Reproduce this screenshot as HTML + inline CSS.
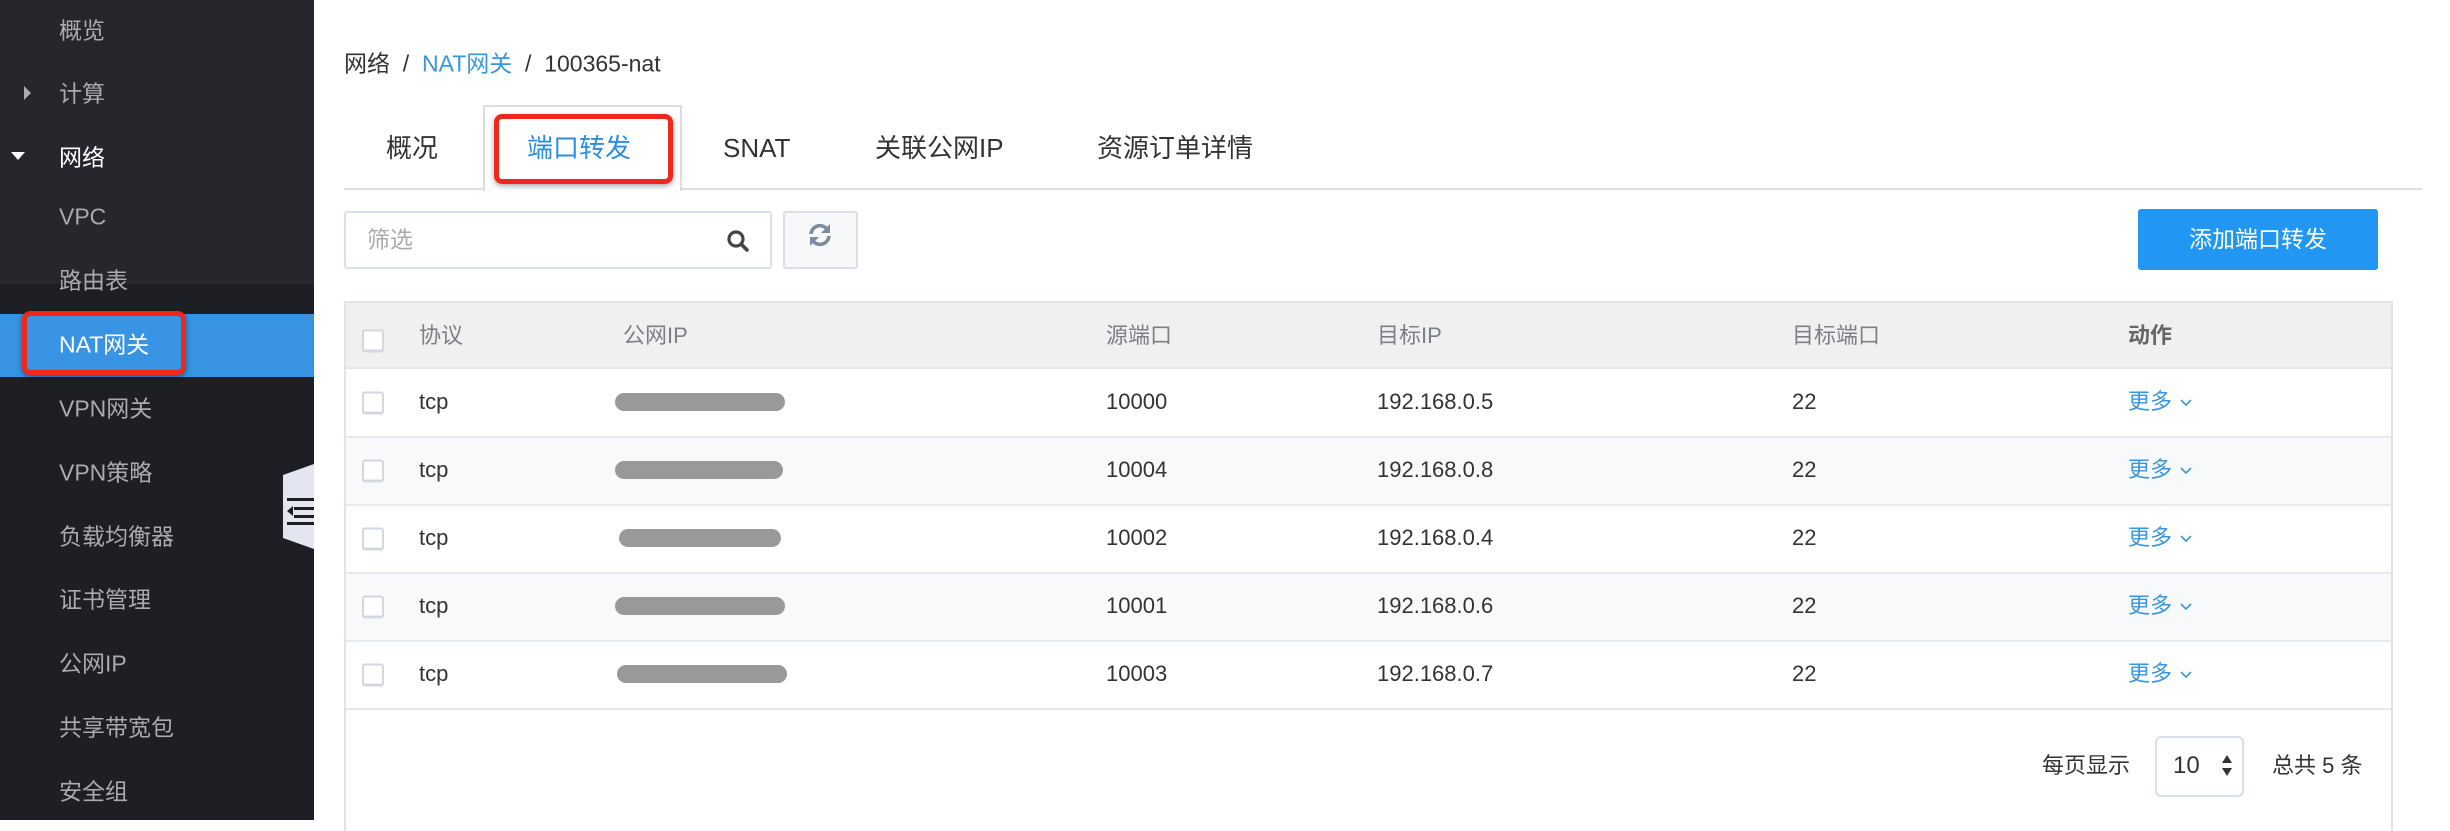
<!DOCTYPE html>
<html><head><meta charset="utf-8"><style>
*{margin:0;padding:0;box-sizing:border-box}
body{width:2450px;height:820px;overflow:hidden;background:#fff;font-family:"Liberation Sans","Noto Sans CJK SC",sans-serif;position:relative}
.a{position:absolute;white-space:nowrap}
.side{position:absolute;left:0;top:0;width:314px;height:820px;background:#1e1f24}
.si{position:absolute;left:59px;font-size:23px;color:#a9abb0;transform:translateY(-50%);line-height:1}
.th{position:absolute;font-size:22px;color:#7a7f88;transform:translateY(-50%);line-height:1}
.td{position:absolute;font-size:22px;color:#333;transform:translateY(-50%);line-height:1}
.tab{position:absolute;top:148px;font-size:26px;color:#333;transform:translateY(-50%);line-height:1}
.cb{position:absolute;left:362px;width:22px;height:23px;border:2px solid #d3d7df;border-bottom-width:3px;border-radius:3px;background:#fff;transform:translateY(-50%)}
.blur{position:absolute;height:18px;background:#999;border-radius:9px;transform:translateY(-50%)}
.more{position:absolute;left:2128px;font-size:22px;color:#3a96dd;transform:translateY(-50%);line-height:1}
.more svg{margin-left:8px;vertical-align:middle}
</style></head><body>
<div class="side">
 <div class="a" style="left:0;top:0;width:314px;height:284px;background:#25272d"></div>
 <div class="a" style="left:0;top:314px;width:314px;height:63px;background:#3893e3"></div>
 <div class="si" style="top:31px">概览</div>
 <div class="a" style="left:24px;top:86px;width:0;height:0;border-top:7px solid transparent;border-bottom:7px solid transparent;border-left:7px solid #a9abb0"></div>
 <div class="si" style="top:94px">计算</div>
 <div class="a" style="left:11px;top:152px;width:0;height:0;border-left:7px solid transparent;border-right:7px solid transparent;border-top:8px solid #fff"></div>
 <div class="si" style="top:158px;color:#fff">网络</div>
 <div class="si" style="top:217px">VPC</div>
 <div class="si" style="top:281px">路由表</div>
 <div class="si" style="top:345px;color:#fff">NAT网关</div>
 <div class="si" style="top:409px">VPN网关</div>
 <div class="si" style="top:473px">VPN策略</div>
 <div class="si" style="top:537px">负载均衡器</div>
 <div class="si" style="top:600px">证书管理</div>
 <div class="si" style="top:664px">公网IP</div>
 <div class="si" style="top:728px">共享带宽包</div>
 <div class="si" style="top:792px">安全组</div>
 <div class="a" style="left:22px;top:311px;width:164px;height:64px;border:5px solid #f0271c;border-radius:8px;box-shadow:0 2px 6px rgba(0,0,0,.4)"></div>
 <svg class="a" style="left:283px;top:464px" width="31" height="85" viewBox="0 0 31 85"><polygon points="0,11 31,0 31,85 0,74" fill="#e3e6f0"/><rect x="4" y="34" width="27" height="3" fill="#1e1f24"/><rect x="11" y="43" width="20" height="3" fill="#1e1f24"/><rect x="11" y="51" width="20" height="3" fill="#1e1f24"/><polygon points="4,47 10,42 10,52" fill="#1e1f24"/><rect x="4" y="58" width="27" height="3" fill="#1e1f24"/></svg>
</div>

<div class="a" style="left:344px;top:64px;transform:translateY(-50%);line-height:1;font-size:23px;color:#333">网络 &nbsp;/&nbsp; <span style="color:#3a96dd">NAT网关</span> &nbsp;/&nbsp; 100365-nat</div>

<div class="a" style="left:344px;top:188px;width:2078px;height:2px;background:#ddd"></div>
<div class="a" style="left:483px;top:105px;width:199px;height:86px;border:2px solid #ddd;border-bottom:none;background:#fff"></div>
<div class="tab" style="left:386px">概况</div>
<div class="tab" style="left:527px;color:#2d8ee0">端口转发</div>
<div class="tab" style="left:723px">SNAT</div>
<div class="tab" style="left:875px">关联公网IP</div>
<div class="tab" style="left:1097px">资源订单详情</div>
<div class="a" style="left:494px;top:114px;width:179px;height:70px;border:5px solid #f0271c;border-radius:8px;box-shadow:0 2px 6px rgba(0,0,0,.35)"></div>

<div class="a" style="left:344px;top:211px;width:428px;height:58px;border:2px solid #d8dfea;border-radius:3px"></div>
<div class="a" style="left:367px;top:240px;transform:translateY(-50%);line-height:1;font-size:23px;color:#aaa">筛选</div>
<svg class="a" style="left:726px;top:229px" width="24" height="24" viewBox="0 0 24 24"><circle cx="10" cy="10" r="7" fill="none" stroke="#444" stroke-width="3.2"/><line x1="15" y1="15" x2="21" y2="21" stroke="#444" stroke-width="3.6" stroke-linecap="round"/></svg>
<div class="a" style="left:783px;top:211px;width:75px;height:58px;border:2px solid #d8dfea;border-radius:3px;background:#f7f8fa"></div>
<svg class="a" style="left:807px;top:222px" width="26" height="26" viewBox="0 0 26 26"><path d="M4 12 A9 9 0 0 1 20 7" fill="none" stroke="#7d8aa0" stroke-width="3.5"/><polygon points="23,2 23,11 14,11" fill="#7d8aa0"/><path d="M22 14 A9 9 0 0 1 6 19" fill="none" stroke="#7d8aa0" stroke-width="3.5"/><polygon points="3,24 3,15 12,15" fill="#7d8aa0"/></svg>
<div class="a" style="left:2138px;top:209px;width:240px;height:61px;background:#2196f3;border-radius:3px;color:#fff;font-size:23px;text-align:center;line-height:61px">添加端口转发</div>

<div class="a" style="left:344px;top:301px;width:2049px;height:530px;border:2px solid #e0e3ea;border-bottom:none"></div>
<div class="a" style="left:346px;top:303px;width:2045px;height:66px;background:#f0f0f0;border-bottom:2px solid #e3e6ec"></div>
<div class="a" style="left:346px;top:437px;width:2045px;height:68px;background:#f8f9fb"></div>
<div class="a" style="left:346px;top:573px;width:2045px;height:68px;background:#f8f9fb"></div>
<div class="a" style="left:346px;top:436px;width:2045px;height:2px;background:#e6e9ef"></div>
<div class="a" style="left:346px;top:504px;width:2045px;height:2px;background:#e6e9ef"></div>
<div class="a" style="left:346px;top:572px;width:2045px;height:2px;background:#e6e9ef"></div>
<div class="a" style="left:346px;top:640px;width:2045px;height:2px;background:#e6e9ef"></div>
<div class="a" style="left:346px;top:708px;width:2045px;height:2px;background:#e6e9ef"></div>

<div class="cb" style="top:341px"></div>
<div class="th" style="left:419px;top:336px">协议</div>
<div class="th" style="left:623px;top:336px">公网IP</div>
<div class="th" style="left:1106px;top:336px">源端口</div>
<div class="th" style="left:1377px;top:336px">目标IP</div>
<div class="th" style="left:1792px;top:336px">目标端口</div>
<div class="th" style="left:2128px;top:336px;font-weight:bold;color:#666">动作</div>

<div class="cb" style="top:403px"></div><div class="td" style="left:419px;top:402px">tcp</div><div class="blur" style="left:615px;top:402px;width:170px"></div><div class="td" style="left:1106px;top:402px">10000</div><div class="td" style="left:1377px;top:402px">192.168.0.5</div><div class="td" style="left:1792px;top:402px">22</div><div class="more" style="top:402px">更多<svg width="12" height="8" viewBox="0 0 12 8"><path d="M1 1 L6 6 L11 1" fill="none" stroke="#3a96dd" stroke-width="1.6"/></svg></div>
<div class="cb" style="top:471px"></div><div class="td" style="left:419px;top:470px">tcp</div><div class="blur" style="left:615px;top:470px;width:168px"></div><div class="td" style="left:1106px;top:470px">10004</div><div class="td" style="left:1377px;top:470px">192.168.0.8</div><div class="td" style="left:1792px;top:470px">22</div><div class="more" style="top:470px">更多<svg width="12" height="8" viewBox="0 0 12 8"><path d="M1 1 L6 6 L11 1" fill="none" stroke="#3a96dd" stroke-width="1.6"/></svg></div>
<div class="cb" style="top:539px"></div><div class="td" style="left:419px;top:538px">tcp</div><div class="blur" style="left:619px;top:538px;width:162px"></div><div class="td" style="left:1106px;top:538px">10002</div><div class="td" style="left:1377px;top:538px">192.168.0.4</div><div class="td" style="left:1792px;top:538px">22</div><div class="more" style="top:538px">更多<svg width="12" height="8" viewBox="0 0 12 8"><path d="M1 1 L6 6 L11 1" fill="none" stroke="#3a96dd" stroke-width="1.6"/></svg></div>
<div class="cb" style="top:607px"></div><div class="td" style="left:419px;top:606px">tcp</div><div class="blur" style="left:615px;top:606px;width:170px"></div><div class="td" style="left:1106px;top:606px">10001</div><div class="td" style="left:1377px;top:606px">192.168.0.6</div><div class="td" style="left:1792px;top:606px">22</div><div class="more" style="top:606px">更多<svg width="12" height="8" viewBox="0 0 12 8"><path d="M1 1 L6 6 L11 1" fill="none" stroke="#3a96dd" stroke-width="1.6"/></svg></div>
<div class="cb" style="top:675px"></div><div class="td" style="left:419px;top:674px">tcp</div><div class="blur" style="left:617px;top:674px;width:170px"></div><div class="td" style="left:1106px;top:674px">10003</div><div class="td" style="left:1377px;top:674px">192.168.0.7</div><div class="td" style="left:1792px;top:674px">22</div><div class="more" style="top:674px">更多<svg width="12" height="8" viewBox="0 0 12 8"><path d="M1 1 L6 6 L11 1" fill="none" stroke="#3a96dd" stroke-width="1.6"/></svg></div>

<div class="td" style="left:2042px;top:766px">每页显示</div>
<div class="a" style="left:2155px;top:736px;width:89px;height:61px;border:2px solid #d8dfea;border-radius:6px"></div>
<div class="td" style="left:2173px;top:766px;font-size:24px">10</div>
<div class="a" style="left:2222px;top:755px;width:0;height:0;border-left:5px solid transparent;border-right:5px solid transparent;border-bottom:8px solid #333"></div>
<div class="a" style="left:2222px;top:768px;width:0;height:0;border-left:5px solid transparent;border-right:5px solid transparent;border-top:8px solid #333"></div>
<div class="td" style="left:2272px;top:766px">总共 5 条</div>
</body></html>
